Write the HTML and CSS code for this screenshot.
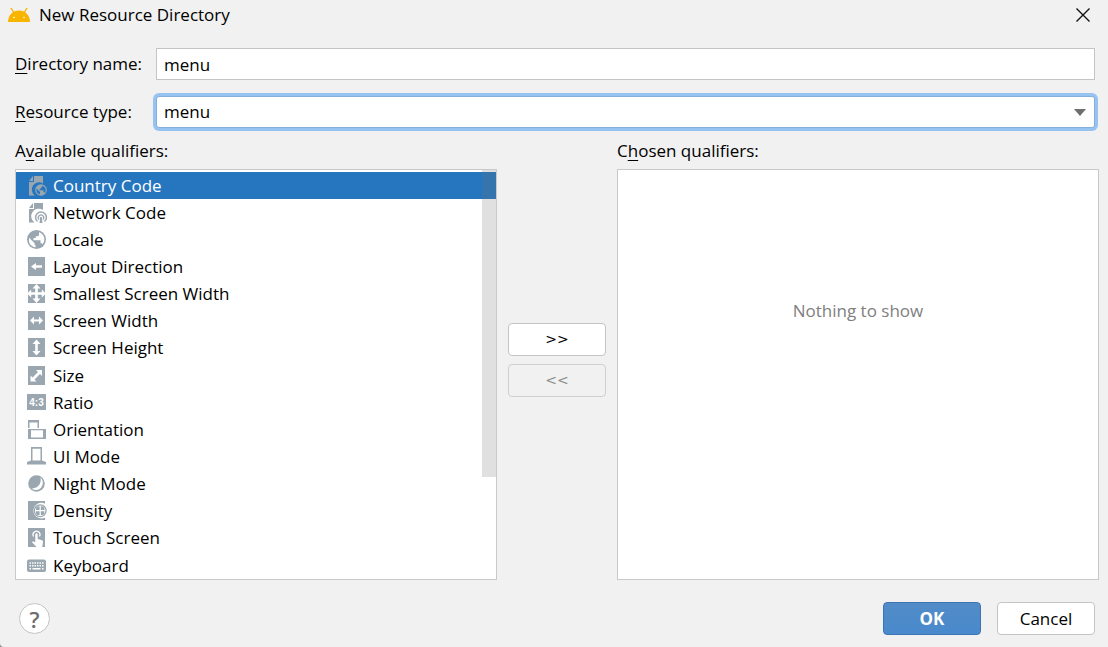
FILE: index.html
```html
<!DOCTYPE html>
<html lang="en">
    <head>
        <meta charset="utf-8">
        <title>New Resource Directory</title>
        <link rel="stylesheet" href="styles.css">
    </head>
    <body>
        <header class="titlebar">
            <svg class="logo" viewBox="0 0 22 14">
                <path d="M3 0l3 5M19 0l-3 5" stroke="#f8b500" stroke-width="1.4" stroke-linecap="round"/>
                <path d="M0 14C0 7 5 2.500 11 2.500S22 7 22 14z" fill="#f8b500"/>
                <circle cx="6" cy="9.500" r=".8" fill="#fff"/>
                <circle cx="16" cy="9.500" r=".8" fill="#fff"/>
            </svg>
            <h1>New Resource Directory</h1>
            <button class="close" type="button" aria-label="Close">
                <svg viewBox="0 0 14 14"><path d="M.5.5l13 13M13.500.5l-13 13" stroke="#111" stroke-width="1.400"/></svg>
            </button>
        </header>

        <form class="dialog">
            <div class="fields">
                <label for="dir-name"><u>D</u>irectory name:</label>
                <input id="dir-name" type="text" value="menu">
                <label for="res-type"><u>R</u>esource type:</label>
                <div class="combo">
                    <select id="res-type">
                        <option>menu</option>
                    </select>
                </div>
            </div>

            <div class="qualifiers">
                <section class="column">
                    <h2 id="available">A<u>v</u>ailable qualifiers:</h2>
                    <div class="panel">
                        <ul class="list" role="listbox" aria-labelledby="available" tabindex="0">
                            <li class="selected" role="option" aria-selected="true">
                                <svg viewBox="0 0 20 20"><path d="M7 0h9v7.500A7 7 0 0 0 8 19.500H2V6h5z"/><path d="M6 0v5H2z"/><circle cx="14" cy="14" r="5.800"/><path class="cut" d="M9.600 12.500l3.400 3.400v2.400C10.500 18 9 15.500 9.600 12.500zM15.200 9.800c3 .8 4.500 4 2.800 7-.4-.6-.8-.9-1.500-.9v-1.700h-4V13h1.200v-1.500h1.500z"/></svg>
                                Country Code
                            </li>
                            <li role="option">
                                <svg viewBox="0 0 20 20"><path d="M7 0h9v7A7 7 0 0 0 7.500 19.500H2V6h5z"/><path d="M6 0v5H2z"/><g class="line"><path d="M10.500 18.500a5.400 5.400 0 1 1 7 0" stroke-width="1.500"/><path d="M12 16.500a2.700 2.700 0 1 1 4 0" stroke-width="1.200"/></g><path d="M13.200 14h1.600l.7 6h-3z"/></svg>
                                Network Code
                            </li>
                            <li role="option">
                                <svg viewBox="0 0 20 20"><circle cx="9.500" cy="9.500" r="9.500"/><path class="cut" d="M2.200 7.800l5.400 5.400v1.300l1 1v1.800C3.800 17 1 12.500 2.200 7.800zM12 2.200c5.200 1.500 7 7.500 3.700 12-.5-.8-1.200-1.200-2.200-1.200v-2.800H6.500V8h2.300V6.200h2.400L12 5z"/></svg>
                                Locale
                            </li>
                            <li role="option">
                                <svg viewBox="0 0 20 20"><path d="M1 0h17v19H1z"/><path class="cut" d="M4 9.500L9 6v2.300h6v2.400H9V13z"/></svg>
                                Layout Direction
                            </li>
                            <li role="option">
                                <svg viewBox="0 0 20 20"><path d="M1 0h17v19H1z"/><path class="cut" d="M9.500 0l4 4.500h-2.700v3.800h4V5.500L19 9.500l-4.200 4v-2.800h-4v3.800h2.700l-4 4.500-4-4.500h2.700v-3.800h-4v2.800L0 9.500l4.200-4v2.800h4V4.500H5.500z"/></svg>
                                Smallest Screen Width
                            </li>
                            <li role="option">
                                <svg viewBox="0 0 20 20"><path d="M1 0h17v19H1z"/><path class="cut" d="M3 9.500L7 5.500v3h5v-3l4 4-4 4v-3H7v3z"/></svg>
                                Screen Width
                            </li>
                            <li role="option">
                                <svg viewBox="0 0 20 20"><path d="M1 0h17v19H1z"/><path class="cut" d="M9.500 1.500l4 4.500h-2.700v7h2.700l-4 4.500-4-4.500h2.700V6H5.500z"/></svg>
                                Screen Height
                            </li>
                            <li role="option">
                                <svg viewBox="0 0 20 20"><path d="M1 0h17v19H1z"/><path class="cut" d="M15 4v6l-2-2-5.500 5.500 2 2h-6v-6l2 2L11 6 9 4z"/></svg>
                                Size
                            </li>
                            <li role="option">
                                <svg viewBox="0 0 20 20"><path d="M0 1h19v16H0z"/><text x="9.500" y="12.500">4:3</text></svg>
                                Ratio
                            </li>
                            <li role="option">
                                <svg viewBox="0 0 20 20"><path fill-rule="evenodd" d="M1 0h11v8h-1.500V2.500h-8V8H1zM1 9h18v10H1zM4 10.300v7.200h12v-7.200z"/></svg>
                                Orientation
                            </li>
                            <li role="option">
                                <svg viewBox="0 0 20 20"><path fill-rule="evenodd" d="M4 0h11v13.500l4 1.500v2.500H0V15l4-1.500zM5.500 1.800v11.700h8V1.800z"/></svg>
                                UI Mode
                            </li>
                            <li role="option">
                                <svg viewBox="0 0 20 20"><circle cx="9.500" cy="9.500" r="8.300"/><path class="cut" d="M13.500 3.600A7.100 7.100 0 1 1 4 14.200C9.500 15.500 15 10.500 13.500 3.600z"/></svg>
                                Night Mode
                            </li>
                            <li role="option">
                                <svg viewBox="0 0 20 20"><path d="M1 0h17v2.800A7.800 7.800 0 1 0 18 16.500V19H1z"/><circle cx="13.200" cy="9.700" r="6.500"/><circle class="cut" cx="13.200" cy="9.700" r="5.200"/><path d="M9 9.100V8q0-2.700 2.700-2.700h.9v3.800zM13.800 9.100V5.300h.9q2.700 0 2.700 2.700v1.100zM9 10.300h3.600v3.800h-.9Q9 14.100 9 11.400zM13.800 10.300h3.600v1.100q0 2.700-2.700 2.700h-.9z"/></svg>
                                Density
                            </li>
                            <li role="option">
                                <svg viewBox="0 0 20 20"><path d="M1 0h17v19H1z"/><path class="cut-line" d="M6.500 8.500a3.500 3.500 0 1 1 6 0" stroke-width="1.200"/><path class="cut" d="M8.300 6q1.200-1.500 2.400 0v5l4.300 1.200q1.300.5 1 1.800l-.8 5H9.500L5 14.200l1-1 2.300 1z"/></svg>
                                Touch Screen
                            </li>
                            <li role="option">
                                <svg viewBox="0 0 20 20"><rect y="3.500" width="19" height="12.500" rx="2"/><path class="cut-line" d="M2.500 7h14M2.500 9.700h14" stroke-width="1.500" stroke-dasharray="1.500 1"/><path class="cut-line" d="M2.500 12.700H4M5.500 12.700h8M15 12.700h1.500" stroke-width="1.500"/></svg>
                                Keyboard
                            </li>
                        </ul>
                        <div class="scroll-thumb"></div>
                    </div>
                </section>

                <div class="transfer">
                    <button class="btn" type="button" aria-label="Add">&gt;&gt;</button>
                    <button class="btn" type="button" aria-label="Remove" disabled>&lt;&lt;</button>
                </div>

                <section class="column">
                    <h2>C<u>h</u>osen qualifiers:</h2>
                    <div class="panel empty">
                        <p>Nothing to show</p>
                    </div>
                </section>
            </div>

            <footer class="actions">
                <button class="help" type="button" aria-label="Help">?</button>
                <button class="btn primary" type="button">OK</button>
                <button class="btn" type="button">Cancel</button>
            </footer>
        </form>
    </body>
</html>
```

FILE: styles.css
```css
*{
    box-sizing: border-box;
}

html{
    background: #8c8c8c;
}

body{
    margin: 0;
    min-height: 100vh;
    display: flex;
    flex-direction: column;
    background: #f1f1f1;
    border-bottom-left-radius: 4px;
    color: #000;
    font-family: "Open Sans", "Noto Sans", sans-serif;
    font-size: 17px;
    line-height: 24px;
}

h1, h2, p, ul{
    margin: 0;
    padding: 0;
    font-size: 17px;
    font-weight: normal;
}

u{
    text-underline-offset: 3px;
}

button, input, select{
    font: inherit;
    color: inherit;
}

.titlebar{
    display: flex;
    align-items: center;
    height: 30px;
    padding: 0 18px 0 8px;
}

.logo{
    width: 22px;
    height: 14px;
    margin-right: 9px;
    fill: none;
}

.close{
    display: flex;
    margin-left: auto;
    padding: 0;
    border: 0;
    background: none;
}

.close svg{
    width: 14px;
    height: 14px;
}

.dialog{
    flex: 1;
    display: flex;
    flex-direction: column;
    padding: 18px 9px 12px 15px;
}

.fields{
    display: grid;
    grid-template-columns: 141px 1fr;
    row-gap: 16px;
    align-items: center;
    padding-right: 4px;
}

.fields input, .fields select{
    display: block;
    width: 100%;
    height: 32px;
    padding: 0 7px;
    border: 1px solid #c4c4c4;
    border-radius: 0;
    background: #fff;
    outline: none;
}

.combo{
    position: relative;
}

.fields select{
    appearance: none;
    border-color: #87afda;
    border-radius: 3px;
    box-shadow: 0 0 0 3px #97c3f3;
}

.combo::after{
    content: "";
    position: absolute;
    right: 9px;
    top: 13px;
    border: 6px solid transparent;
    border-top: 7px solid #6e6e6e;
    border-bottom: 0;
    pointer-events: none;
}

.qualifiers{
    flex: 1;
    display: grid;
    grid-template-columns: 1fr 98px 1fr;
    column-gap: 11px;
    margin-top: 11px;
}

.column{
    display: flex;
    flex-direction: column;
}

.panel{
    position: relative;
    flex: 1;
    display: flex;
    margin-top: 6px;
    border: 1px solid #c9c9c9;
    background: #fff;
}

.list{
    flex: 1;
    display: flex;
    flex-direction: column;
    padding-top: 2px;
    list-style: none;
    outline: none;
}

.list li{
    --paper: #fff;
    flex: 1;
    display: flex;
    align-items: center;
    gap: 6px;
    padding-left: 11px;
}

.list .selected{
    --paper: #2675bf;
    background: #2675bf;
    color: #fff;
}

.list svg{
    width: 20px;
    height: 20px;
    fill: #9aa7b0;
}

.list .line{
    fill: none;
    stroke: #9aa7b0;
}

.list .cut{
    fill: var(--paper);
}

.list .cut-line{
    fill: none;
    stroke: var(--paper);
}

.list text{
    fill: #fff;
    font: bold 10px "Liberation Sans", sans-serif;
    text-anchor: middle;
}

.scroll-thumb{
    position: absolute;
    top: 0;
    right: 0;
    width: 14px;
    height: 75%;
    background: rgba(115, 115, 115, 0.22);
}

.empty{
    justify-content: center;
    padding-top: 129px;
    color: #808080;
}

.transfer{
    display: flex;
    flex-direction: column;
    justify-content: center;
    gap: 8px;
}

.btn{
    width: 98px;
    height: 33px;
    padding: 0;
    border: 1px solid #c4c4c4;
    border-radius: 4px;
    background: #fff;
}

.btn:disabled{
    background: #f1f1f1;
    border-color: #cfcfcf;
    color: #8c8c8c;
}

.transfer .btn{
    font-family: "DejaVu Sans", sans-serif;
    font-size: 14px;
}

.actions{
    display: flex;
    align-items: center;
    gap: 16px;
    margin-top: 22px;
    padding: 0 4px;
}

.help{
    width: 31px;
    height: 31px;
    margin-right: auto;
    padding: 0;
    border: 1px solid #c4c4c4;
    border-radius: 50%;
    background: #fff;
    color: #6e6e6e;
    font-size: 22px;
    font-weight: 600;
}

.primary{
    border-color: #3b74b4;
    background: linear-gradient(#528cc7, #4989cc);
    color: #fff;
    font-weight: bold;
}
```
